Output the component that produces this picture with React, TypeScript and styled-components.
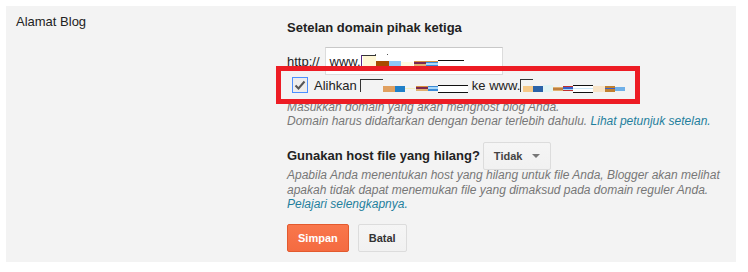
import React from "react"
import styled, { createGlobalStyle } from "styled-components"

const GlobalStyle = createGlobalStyle`
    body {
        margin: 0;
        background: #ffffff;
        font-family: "Liberation Sans", Arial, sans-serif;
    }
`

const Panel = styled.section`
    box-sizing: border-box;
    margin: 6px 0 0 6px;
    width: 730px;
    height: 256px;
    background: #f3f3f3;
    padding: 8px 0 0 10px;
    display: grid;
    grid-template-columns: 271px 1fr;
`

const Label = styled.div`
    font-size: 13px;
    line-height: 16px;
    color: #222;
`

const Column = styled.div`
    padding-top: 6px;
    display: flex;
    flex-direction: column;
    align-items: flex-start;
`

const Heading = styled.div`
    font-size: 13px;
    font-weight: bold;
    line-height: 16px;
    color: #222;
`

const InputRow = styled.div`
    display: flex;
    align-items: center;
    gap: 5px;
    margin-top: 11px;
    font-size: 13px;
    color: #222;
`

const TextBox = styled.div`
    box-sizing: border-box;
    width: 178px;
    height: 28px;
    background: #fff;
    border: 1px solid #dcdcdc;
    border-top-color: #c8c8c8;
    padding: 0 4px;
    display: flex;
    align-items: center;
    font-size: 13px;
    color: #222;
`

const CheckRow = styled.div`
    position: relative;
    display: flex;
    align-items: center;
    gap: 6px;
    height: 18px;
    margin-top: 1px;
    padding-left: 5px;
    font-size: 13px;
    color: #222;
`

const Box = styled.span`
    box-sizing: border-box;
    width: 16px;
    height: 16px;
    border: 1px solid #4d90fe;
    background: #ededed;
    display: flex;
    align-items: center;
    justify-content: center;
`

const Marker = styled.div`
    position: absolute;
    left: -11px;
    top: -10px;
    width: 364px;
    height: 38px;
    box-sizing: border-box;
    border: 5px solid #ed1c24;
    pointer-events: none;
`

const Help = styled.div<{ $gap: number; $lh: number }>`
    margin-top: ${p => p.$gap}px;
    font-size: 12px;
    line-height: ${p => p.$lh}px;
    font-style: italic;
    color: #777;
`

const Link = styled.a`
    color: #1f7f9d;
    text-decoration: none;
`

const HostRow = styled.div`
    display: flex;
    align-items: center;
    gap: 3px;
    margin-top: 14px;
`

const Select = styled.div`
    box-sizing: border-box;
    height: 28px;
    padding: 0 10px 0 10px;
    display: flex;
    align-items: center;
    gap: 10px;
    font-size: 11px;
    font-weight: bold;
    color: #444;
    background: linear-gradient(#f5f5f5, #f1f1f1);
    border: 1px solid #dcdcdc;
    border-radius: 2px;
`

const Caret = styled.span`
    width: 0;
    height: 0;
    border-left: 4px solid transparent;
    border-right: 4px solid transparent;
    border-top: 4px solid #777;
`

const Buttons = styled.div`
    display: flex;
    gap: 9px;
    margin-top: 12px;
`

const Button = styled.button<{ $primary?: boolean }>`
    box-sizing: border-box;
    height: 28px;
    padding: 0 10px;
    font-family: inherit;
    font-size: 11px;
    font-weight: bold;
    border-radius: 2px;
    color: ${p => (p.$primary ? "#fff" : "#333")};
    background: ${p => (p.$primary ? "linear-gradient(#f9774c, #f46b41)" : "linear-gradient(#f5f5f5, #f1f1f1)")};
    border: 1px solid ${p => (p.$primary ? "#e35a2e" : "#dcdcdc")};
`

const Blot = styled.svg`
    display: inline-block;
    vertical-align: -3px;
`

type R = [number, number, number, number, string]

// redacted bits of the domain name
const blobInput: R[] = [
    [0, 1, 1, 11, "#5b2a86"], [1, 1, 14, 1, "#333"], [2, 2, 13, 10, "#fff7d6"],
    [15, 7, 13, 5, "#a84c00"], [28, 7, 12, 5, "#8ec8f8"], [40, 8, 12, 4, "#fffbe0"],
    [53, 7, 12, 1, "#d89040"], [53, 8, 12, 2, "#7a2850"], [53, 10, 12, 2, "#e0b070"],
    [65, 7, 12, 1, "#d89040"], [65, 8, 12, 1, "#3a8ad8"], [65, 9, 12, 2, "#a8d8f8"], [65, 11, 12, 1, "#3a8ad8"],
    [77, 6, 26, 1, "#111"], [77, 7, 26, 5, "#fff"], [77, 12, 26, 1, "#111"],
    [14, 0, 1, 1, "#555"], [26, 0, 1, 1, "#555"],
]

const blobFrom: R[] = [
    [0, 1, 1, 13, "#333"], [1, 1, 22, 1, "#333"], [23, 8, 12, 6, "#e0a060"], [35, 8, 10, 6, "#2080c8"],
    [45, 10, 10, 1, "#f3eec0"],
    [56, 8, 12, 1, "#d89040"], [56, 9, 12, 2, "#7a2850"], [56, 11, 12, 2, "#e0b070"],
    [68, 8, 10, 1, "#3a8ad8"], [68, 9, 10, 2, "#a8d8f8"], [68, 11, 10, 2, "#3a8ad8"],
    [78, 7, 30, 1, "#111"], [78, 8, 30, 6, "#fff"], [78, 14, 30, 1, "#111"],
]

const blobTo: R[] = [
    [0, 1, 1, 13, "#333"], [1, 1, 12, 1, "#333"], [3, 8, 10, 6, "#f5c888"], [13, 8, 10, 6, "#2a62a8"],
    [23, 7, 10, 7, "#e2f4f4"],
    [33, 9, 10, 1, "#e0b070"], [33, 10, 10, 2, "#c08040"], [33, 12, 10, 1, "#e0b070"],
    [43, 8, 10, 1, "#c03030"], [43, 9, 10, 2, "#3a60c8"], [43, 11, 10, 1, "#a8d8f8"], [43, 12, 10, 1, "#c03030"],
    [53, 7, 20, 1, "#111"], [53, 8, 20, 6, "#fff"], [53, 14, 20, 1, "#111"], [53, 10, 20, 1, "#cde8f8"],
    [73, 8, 12, 6, "#f8e4c8"], [85, 8, 10, 6, "#c08030"], [85, 10, 10, 1, "#3a60c8"], [95, 9, 10, 4, "#70b0e8"],
]

function Redacted({ rects, width }: { rects: R[]; width: number }) {
    return (
        <Blot width={width} height={15} viewBox={`0 0 ${width} 15`}>
            {rects.map(([x, y, w, h, c], i) => (
                <rect key={i} x={x} y={y} width={w} height={h} fill={c} />
            ))}
        </Blot>
    )
}

export default function App() {
    return (
        <>
            <GlobalStyle />
            <Panel>
                <Label>Alamat Blog</Label>
                <Column>
                    <Heading>Setelan domain pihak ketiga</Heading>
                    <InputRow>
                        http://
                        <TextBox>
                            www.<Redacted rects={blobInput} width={104} />
                        </TextBox>
                    </InputRow>
                    <CheckRow>
                        <Box>
                            <svg width="12" height="12" viewBox="0 0 12 12">
                                <path d="M1.5 6.5 L4.5 9.5 L10.5 2.5" fill="none" stroke="#555" strokeWidth="2" />
                            </svg>
                        </Box>
                        <span>
                            Alihkan <Redacted rects={blobFrom} width={108} /> ke www.<Redacted rects={blobTo} width={106} />
                        </span>
                        <Marker />
                    </CheckRow>
                    <Help $gap={6} $lh={14}>
                        Masukkan domain yang akan menghost blog Anda.
                        <br />
                        Domain harus didaftarkan dengan benar terlebih dahulu. <Link>Lihat petunjuk setelan.</Link>
                    </Help>
                    <HostRow>
                        <Heading>Gunakan host file yang hilang?</Heading>
                        <Select>
                            Tidak
                            <Caret />
                        </Select>
                    </HostRow>
                    <Help $gap={-2} $lh={14.5}>
                        Apabila Anda menentukan host yang hilang untuk file Anda, Blogger akan melihat
                        <br />
                        apakah tidak dapat menemukan file yang dimaksud pada domain reguler Anda.
                        <br />
                        <Link>Pelajari selengkapnya.</Link>
                    </Help>
                    <Buttons>
                        <Button $primary>Simpan</Button>
                        <Button>Batal</Button>
                    </Buttons>
                </Column>
            </Panel>
        </>
    )
}
